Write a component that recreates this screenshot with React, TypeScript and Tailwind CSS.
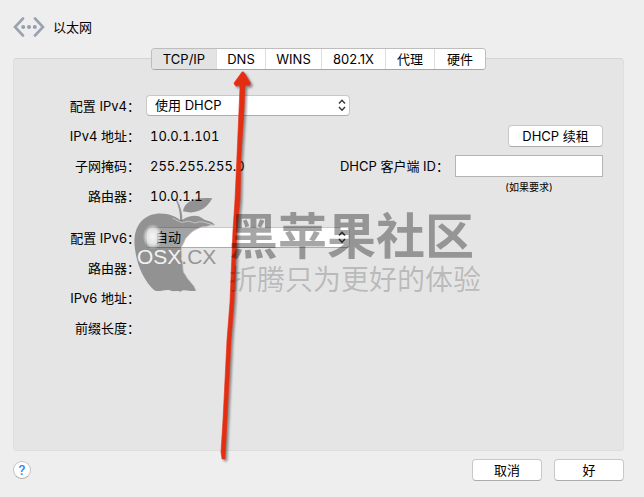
import { useState, type ReactNode } from "react";

const tabs = [
  { name: "TCP/IP", width: "w-[65px]" },
  { name: "DNS", width: "w-[49px]" },
  { name: "WINS", width: "w-14" },
  { name: "802.1X", width: "w-16" },
  { name: "代理", width: "w-[49px]" },
  { name: "硬件", width: "w-[50px]" },
];

const buttonLook =
  "h-[22px] rounded border border-[#c8c8c8] border-b-[#acacac] bg-white text-center leading-5";

function EthernetIcon() {
  return (
    <svg width="32" height="20" viewBox="0 0 32 20" aria-hidden="true">
      <g fill="none" stroke="#9aa1b1" strokeWidth="2.6" strokeLinecap="round" strokeLinejoin="miter">
        <path d="M10 1.5 L2 10 L10 18.5" />
        <path d="M22 1.5 L30 10 L22 18.5" />
      </g>
      <g fill="#979daf">
        <circle cx="10.2" cy="10" r="2" />
        <circle cx="16" cy="10" r="2" />
        <circle cx="21.8" cy="10" r="2" />
      </g>
    </svg>
  );
}

function PopUp({ id, options }: { id: string; options: string[] }) {
  return (
    <span className="relative block w-[204px]">
      <select
        id={id}
        className="block h-[21px] w-full appearance-none rounded border border-[#c8c8c8] border-b-[#acacac] bg-white pl-2 leading-[19px]"
      >
        {options.map((option) => (
          <option key={option}>{option}</option>
        ))}
      </select>
      <svg
        className="pointer-events-none absolute top-1 right-1"
        width="8"
        height="12"
        viewBox="0 0 8 12"
        fill="none"
        stroke="#3c3c3c"
        strokeWidth="1.5"
        aria-hidden="true"
      >
        <path d="M1 4.5 L4 1.3 L7 4.5 M1 8 L4 11.2 L7 8" />
      </svg>
    </span>
  );
}

function Row({ label, htmlFor, tall, children }: { label: string; htmlFor?: string; tall?: boolean; children?: ReactNode }) {
  return (
    <div className={`flex items-center gap-1.5 ${tall ? "h-[31px]" : "h-[30px]"}`}>
      {htmlFor ? (
        <label htmlFor={htmlFor} className="w-[126px] text-right">{label}</label>
      ) : (
        <span className="w-[126px] text-right">{label}</span>
      )}
      {children}
    </div>
  );
}

function Value({ children }: { children: string }) {
  return <span className="pl-1 tabular-nums">{children}</span>;
}

function Watermark() {
  return (
    <div className="pointer-events-none absolute top-[190px] left-[120px]">
      <svg className="block" width="130" height="110" viewBox="0 0 390 330" aria-hidden="true">
        <defs>
          <radialGradient id="shine">
            <stop offset="0" stopColor="#fff" stopOpacity="0.9" />
            <stop offset="0.6" stopColor="#fff" stopOpacity="0.7" />
            <stop offset="1" stopColor="#fff" stopOpacity="0" />
          </radialGradient>
        </defs>
        <g fill="#000" fillOpacity="0.36">
          <path d="M182 92 C168 76 125 62 90 76 C52 92 38 130 45 178 C51 226 72 272 101 299 C117 310 134 296 149 301 C160 306 170 301 181 305 C194 294 212 307 228 302 C223 282 204 273 196 254 C184 243 193 222 184 207 C188 190 180 180 187 166 C195 154 194 145 204 138 C216 122 231 116 249 110 C261 112 269 103 285 105 C274 91 257 94 247 85 C231 72 207 77 190 88 Z" />
          <path d="M189 64 C193 34 225 20 277 25 C260 57 229 75 189 64 Z" />
          <path d="M165 26 L172 31 C183 52 188 72 187 94 L180 92 C181 67 176 46 165 26 Z" />
        </g>
        <path
          d="M158 85 C172 90 178 99 193 96 C211 89 218 101 229 98 C243 91 257 99 277 104"
          fill="none"
          stroke="#c9c6c5"
          strokeWidth="3"
        />
        <path
          d="M285 105 C269 103 261 112 249 110 C231 116 216 122 204 138 C194 145 195 154 187 166 C180 180 188 190 184 207 C193 222 184 243 196 254 C204 273 223 282 228 302"
          fill="none"
          stroke="#d0c3be"
          strokeOpacity="0.8"
          strokeWidth="3"
        />
        <ellipse cx="98" cy="140" rx="30" ry="38" fill="url(#shine)" />
      </svg>
      <p className="absolute top-[54px] left-[17px] font-['Liberation_Sans',sans-serif] text-[21px] leading-[26px] font-medium text-[#959595]">
        <span className="text-[#f2f2f2]">OSX</span>.CX
      </p>
      <div className="absolute top-4 left-[109px] font-['Noto_Sans_CJK_SC',sans-serif] whitespace-nowrap">
        <p className="text-[49px] leading-[54px] font-bold text-black/35">黑苹果社区</p>
        <p className="text-[28px] leading-9 font-normal text-black/20">折腾只为更好的体验</p>
      </div>
    </div>
  );
}

function RedArrow() {
  return (
    <svg
      className="pointer-events-none absolute top-[70px] left-[215px] drop-shadow-[2px_2px_1px_rgba(0,0,0,0.4)]"
      width="40"
      height="395"
      viewBox="0 0 40 395"
      aria-hidden="true"
    >
      <path
        d="M27 2 Q28 1 29.5 3 L35.5 13 Q35 17 31 15 L30 17 L29 40 L26 86 L25 130 L22 160 L19 232 L16 270 L12 350 L10 389 H7 L6 382 L8 350 L12 270 L15 232 L18 160 L20 130 L22 86 L24 40 L25 17 L24 15 Q20 18 19 13 Z"
        fill="#e52d12"
        stroke="#e52d12"
        strokeWidth="0.6"
      />
    </svg>
  );
}

export default function App() {
  const [active, setActive] = useState("TCP/IP");

  return (
    <main className="relative flex min-h-screen flex-col overflow-hidden bg-[#eeeeee] pt-4 pr-5 pb-4 pl-[13px] font-['Inter','Noto_Sans_CJK_SC',sans-serif] text-[13px] leading-5 text-black">
      <header className="mb-5 flex h-[22px] items-center gap-2">
        <EthernetIcon />
        <h1>以太网</h1>
      </header>

      <section className="flex-1 rounded border border-[#dedede] border-t-[#d4d4d4] bg-[#e5e5e5]">
        <div
          role="tablist"
          className="mx-auto -mt-[11px] flex h-[22px] w-fit overflow-hidden rounded border border-[#bdbdbd] border-b-[#a5a5a5] bg-white"
        >
          {tabs.map((tab) => (
            <button
              key={tab.name}
              type="button"
              role="tab"
              aria-selected={active === tab.name}
              onClick={() => setActive(tab.name)}
              className={`${tab.width} border-r border-[#dddddd] leading-5 last:border-r-0 ${active === tab.name ? "bg-[#e3e3e3]" : "bg-white"}`}
            >
              {tab.name}
            </button>
          ))}
        </div>

        <div className="flex justify-between pt-5 pr-5">
          <div className="flex flex-col gap-[11px]">
            <div>
              <Row label="配置 IPv4：" htmlFor="ipv4" tall>
                <PopUp id="ipv4" options={["使用 DHCP", "手动", "关闭"]} />
              </Row>
              <Row label="IPv4 地址：">
                <Value>10.0.1.101</Value>
              </Row>
              <Row label="子网掩码：">
                <Value>255.255.255.0</Value>
              </Row>
              <Row label="路由器：">
                <Value>10.0.1.1</Value>
              </Row>
            </div>
            <div>
              <Row label="配置 IPv6：" htmlFor="ipv6" tall>
                <PopUp id="ipv6" options={["自动", "手动", "仅本地链接"]} />
              </Row>
              <Row label="路由器：" />
              <Row label="IPv6 地址：" />
              <Row label="前缀长度：" />
            </div>
          </div>

          <div className="-ml-4 flex flex-col items-end pt-[31px] whitespace-nowrap">
            <div className="flex h-[30px] items-center">
              <button type="button" className={`${buttonLook} w-[95px]`}>DHCP 续租</button>
            </div>
            <div className="flex h-[30px] items-center gap-1.5">
              <label htmlFor="client">DHCP 客户端 ID：</label>
              <input id="client" type="text" className="h-[22px] w-[148px] border border-[#b4b4b4] bg-white px-1" />
            </div>
            <p className="w-[148px] text-center text-[10px] leading-3">(如果要求)</p>
          </div>
        </div>
      </section>

      <footer className="mt-2 flex items-center justify-end gap-3">
        <button
          type="button"
          aria-label="帮助"
          className="mr-auto h-[18px] w-[18px] rounded-full border border-[#c4c4c4] border-b-[#a8a8a8] bg-white text-[13px] leading-4 font-medium text-[#2f7cf6]"
        >
          ?
        </button>
        <button type="button" className={`${buttonLook} w-[70px]`}>取消</button>
        <button type="button" className={`${buttonLook} w-[70px]`}>好</button>
      </footer>

      <RedArrow />
      <Watermark />
    </main>
  );
}
